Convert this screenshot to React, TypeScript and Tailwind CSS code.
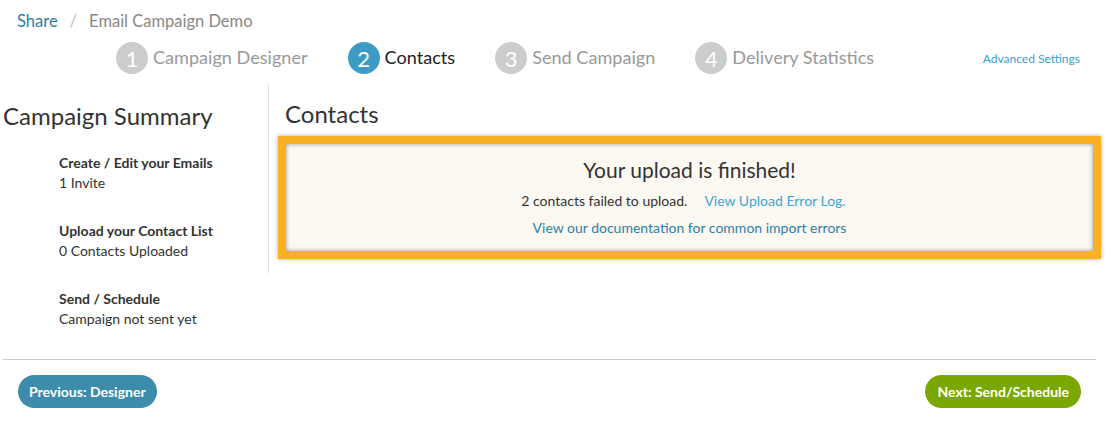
import React from "react";

const Step = ({ n, label, active }: { n: number; label: string; active?: boolean }) => (
  <div className="flex items-center gap-[5px]">
    <div
      className={`w-[32px] h-[32px] rounded-full flex items-center justify-center text-white text-[22px] ${
        active ? "bg-[#3d9cc5]" : "bg-[#cccccc]"
      }`}
    >
      {n}
    </div>
    <span className={`text-[18.1px] ${active ? "text-[#222]" : "text-[#999]"}`}>{label}</span>
  </div>
);

const Item = ({ title, sub }: { title: string; sub: string }) => (
  <div className="mb-[28px]">
    <div className="text-[14px] font-bold text-[#333] leading-[20px]">{title}</div>
    <div className="text-[14px] text-[#333] leading-[20px]">{sub}</div>
  </div>
);

export default function App() {
  return (
    <div className="w-[1106px] h-[423px] bg-white overflow-hidden" style={{ fontFamily: "Lato, 'Open Sans', sans-serif" }}>
      <div className="pl-[17px] pt-[11px] text-[16.5px] leading-[20px] flex items-center gap-[12px]">
        <span className="text-[#2e7ea6]">Share</span>
        <span className="text-[#bbb]">/</span>
        <span className="text-[#888]">Email Campaign Demo</span>
      </div>
      <div className="flex items-center mt-[11px] h-[32px]">
        <div className="ml-[116px] flex items-center gap-[40px]">
          <Step n={1} label="Campaign Designer" />
          <Step n={2} label="Contacts" active />
          <Step n={3} label="Send Campaign" />
          <Step n={4} label="Delivery Statistics" />
        </div>
        <a className="ml-auto mr-[26px] text-[12px] text-[#3ca0d6] mt-[2px]">Advanced Settings</a>
      </div>
      <div className="flex items-start mt-[10px]">
        <div className="w-[268px] shrink-0 pl-[3px] pt-[17px]">
          <div className="text-[24px] text-[#333] leading-[30px]">Campaign Summary</div>
          <div className="pl-[56px] mt-[22px]">
            <Item title="Create / Edit your Emails" sub="1 Invite" />
            <Item title="Upload your Contact List" sub="0 Contacts Uploaded" />
            <Item title="Send / Schedule" sub="Campaign not sent yet" />
          </div>
        </div>
        <div className="flex-1 border-l border-[#dddddd] pl-[9px] pr-[5px] pt-[15px] pb-[14px]">
          <div className="text-[24px] text-[#333] leading-[30px] pl-[7px]">Contacts</div>
          <div className="mt-[7px] border-[8px] border-[#f9b122] shadow-[0_0_4px_rgba(0,0,0,0.35)]">
            <div className="bg-[#fcf8f2] shadow-[inset_0_0_4px_rgba(0,0,0,0.4)] h-[107px] flex flex-col items-center pt-[13px]">
              <div className="text-[21px] text-[#333] leading-[26px]">Your upload is finished!</div>
              <div className="text-[14px] text-[#333] mt-[9px] leading-[18px] flex gap-[17px] pr-[12px]">
                <span>2 contacts failed to upload.</span>
                <span className="text-[#3ca5d8]">View Upload Error Log.</span>
              </div>
              <div className="text-[14px] text-[#2f7fa6] mt-[9px] leading-[18px]">View our documentation for common import errors</div>
            </div>
          </div>
        </div>
      </div>
      <div className="ml-[3px] mr-[10px] border-t border-[#cccccc] mt-[2px]" />
      <div className="flex justify-between pl-[18px] pr-[25px] mt-[15px]">
        <button className="h-[33px] px-[11px] rounded-full bg-[#3d8cab] text-white text-[14px] font-bold">Previous: Designer</button>
        <button className="h-[33px] px-[12px] rounded-full bg-[#7aa800] text-white text-[14px] font-bold">Next: Send/Schedule</button>
      </div>
    </div>
  );
}
